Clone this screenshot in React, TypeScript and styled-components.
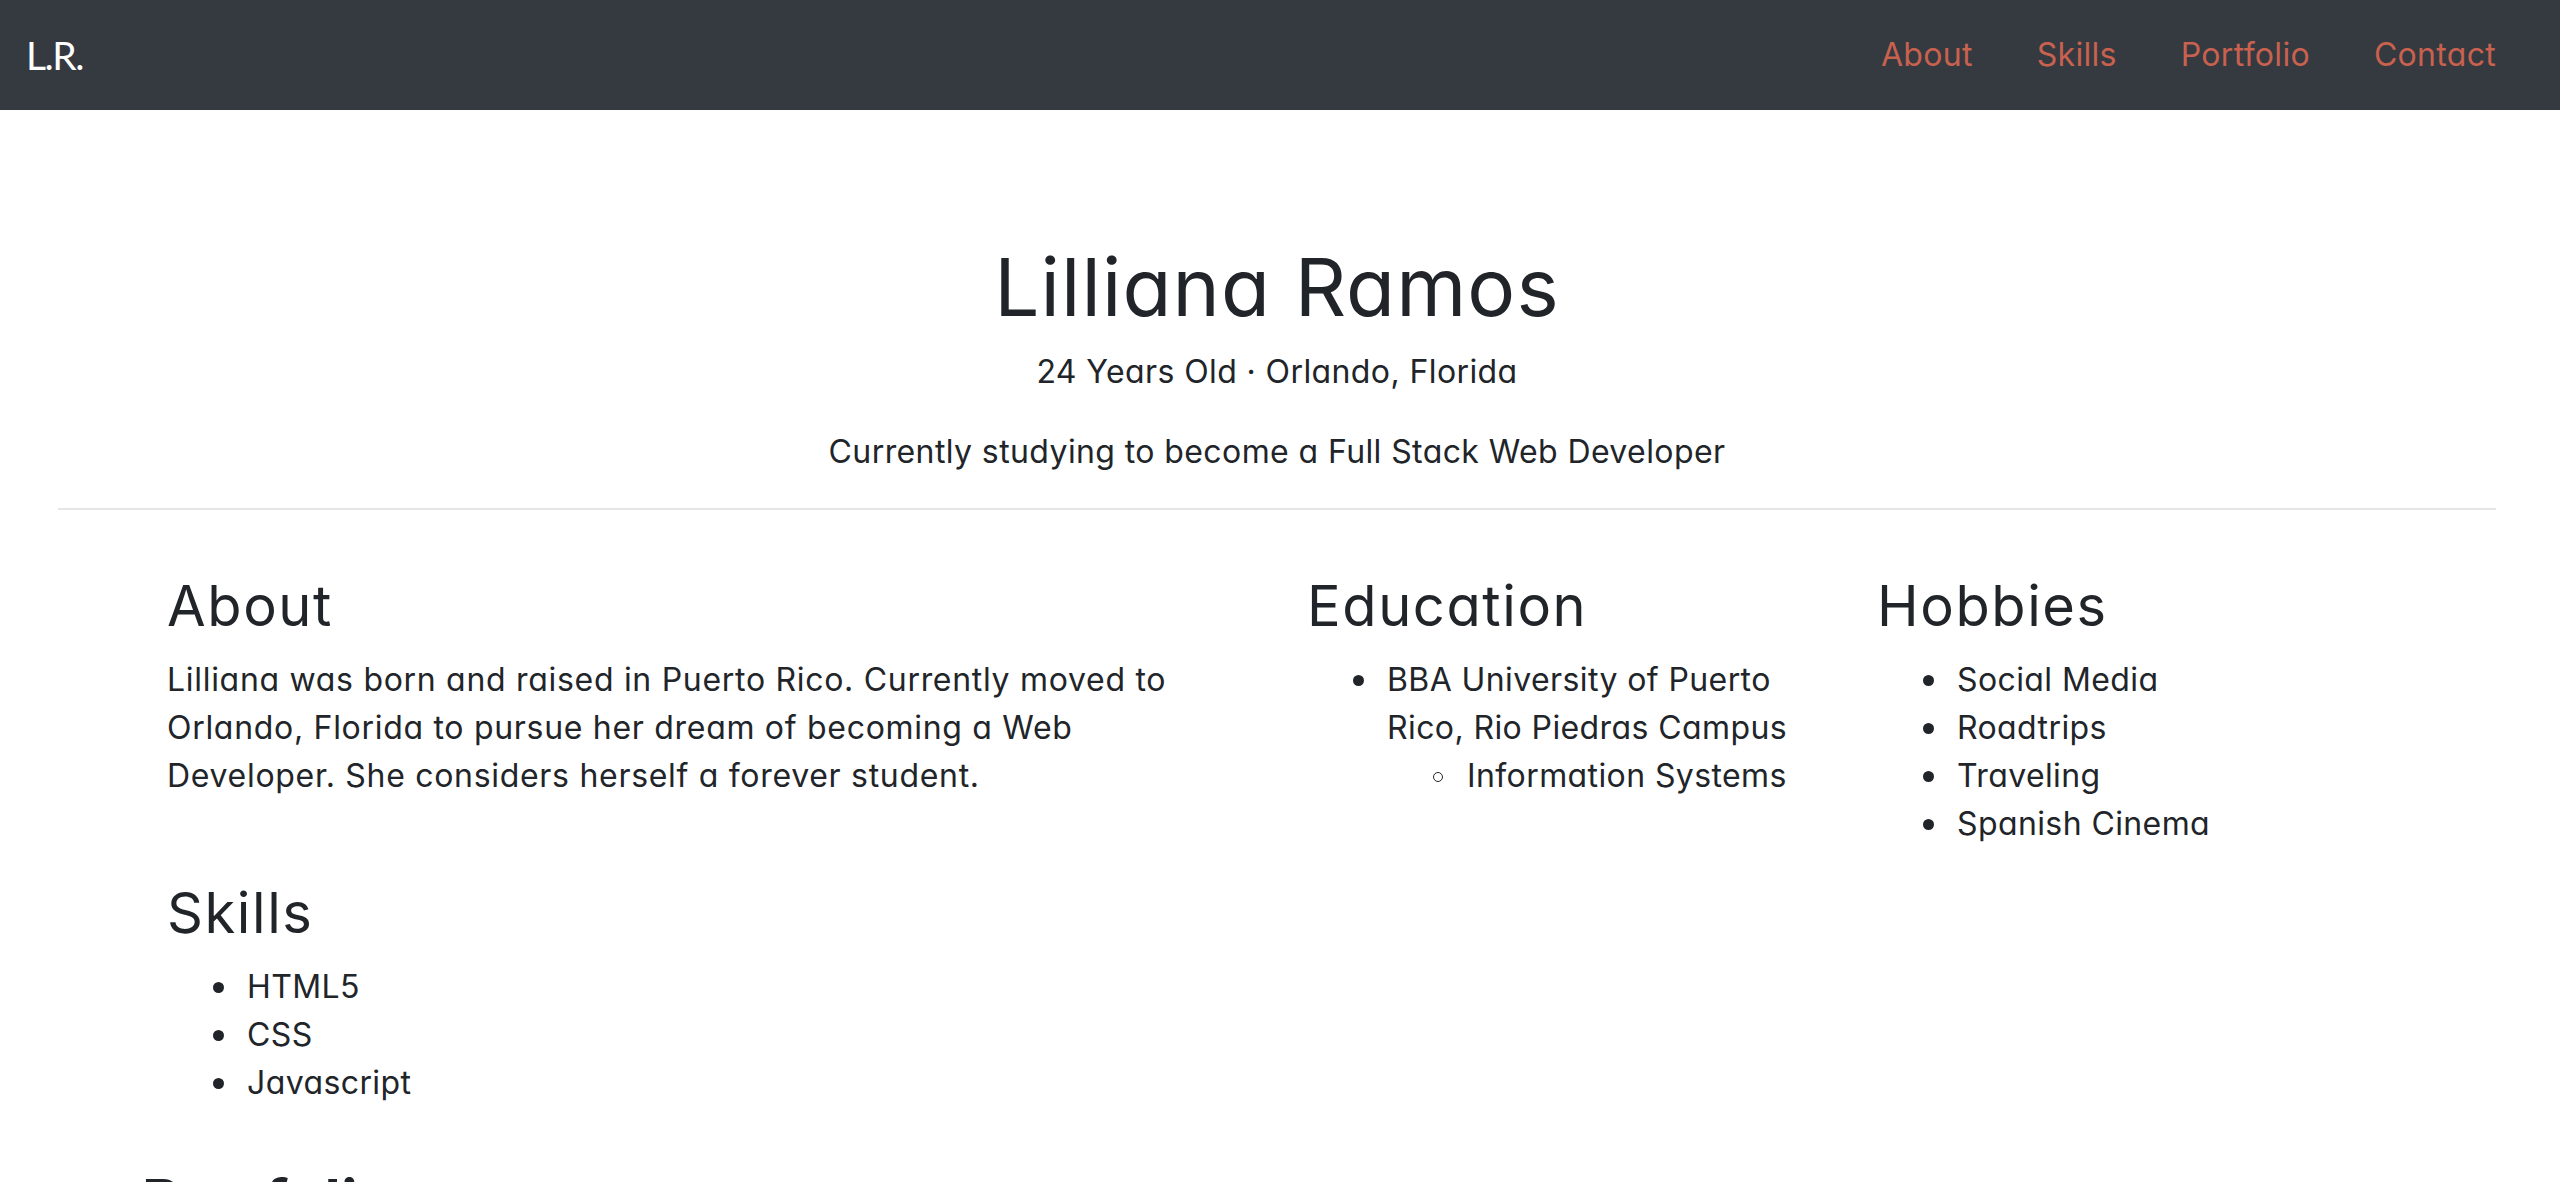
import React from "react";
import styled, { createGlobalStyle } from "styled-components";

const GlobalStyle = createGlobalStyle`
  html, body {
    margin: 0;
    padding: 0;
    background: #ffffff;
  }
  body {
    font-family: "Inter", "Noto Sans", sans-serif;
    font-feature-settings: "cv11" 1;
    font-size: 32px;
    line-height: 1.5;
    letter-spacing: 0.4px;
    color: #212529;
    overflow: hidden;
  }
  * { box-sizing: border-box; }
`;

const NavBar = styled.nav`
  height: 110px;
  background: #343a40;
  display: flex;
  align-items: center;
  justify-content: space-between;
  padding: 0 32px 0 26px;
`;

const Brand = styled.a`
  font-family: "Lato", "Liberation Sans", sans-serif;
  font-feature-settings: normal;
  font-size: 39px;
  letter-spacing: -1.5px;
  color: #ffffff;
  text-decoration: none;
  line-height: 1;
`;

const NavList = styled.div`
  display: flex;
  align-items: center;
`;

const NavLink = styled.a`
  padding: 0 32px;
  color: #c9614f;
  font-size: 32px;
  letter-spacing: 0.3px;
  text-decoration: none;
`;

const Main = styled.main`
  width: 2554px;
`;

const Hero = styled.header`
  text-align: center;
  padding-top: 129px;
`;

const Title = styled.h1`
  font-size: 80px;
  font-weight: 400;
  line-height: 1.2;
  letter-spacing: 1.1px;
  margin: 0 0 13px;
`;

const Lead = styled.p`
  margin: 0 0 32px;
`;

const Divider = styled.hr`
  margin: 32px 58px 0;
  border: 0;
  border-top: 2px solid rgba(0, 0, 0, 0.1);
  height: 0;
`;

const Container = styled.div`
  width: 2280px;
  margin: 0 auto;
  padding-top: 63px;
`;

const Row = styled.div`
  display: grid;
  grid-template-columns: 1140px 570px 570px;
`;

const Col = styled.section`
  padding: 0 30px;
`;

const SectionTitle = styled.h3`
  font-size: 56px;
  font-weight: 400;
  line-height: 1.2;
  letter-spacing: 1.6px;
  margin: 0 0 16px;
`;

const Paragraph = styled.p`
  margin: 0 0 32px;
  letter-spacing: 0.7px;
`;

const List = styled.ul<{ $nested?: boolean }>`
  margin: 0 0 ${(p) => (p.$nested ? "0" : "32px")};
  padding-left: 80px;
  list-style: none;

  & > li {
    position: relative;
  }

  & > li::before {
    content: "";
    position: absolute;
    box-sizing: border-box;
    left: ${(p) => (p.$nested ? "-34px" : "-34px")};
    top: ${(p) => (p.$nested ? "20px" : "19px")};
    width: ${(p) => (p.$nested ? "10px" : "11px")};
    height: ${(p) => (p.$nested ? "10px" : "11px")};
    border-radius: 50%;
    background: ${(p) => (p.$nested ? "transparent" : "#212529")};
    border: ${(p) => (p.$nested ? "1.5px solid #212529" : "0")};
  }
`;

const PortfolioWrap = styled.div`
  padding: 26px 142px 0;
`;

const PortfolioTitle = styled.h2`
  font-size: 60px;
  font-weight: 700;
  line-height: 1.2;
  margin: 0;
`;

export default function App() {
  return (
    <>
      <GlobalStyle />
      <NavBar>
        <Brand href="#">L.R.</Brand>
        <NavList>
          <NavLink href="#about">About</NavLink>
          <NavLink href="#skills">Skills</NavLink>
          <NavLink href="#portfolio">Portfolio</NavLink>
          <NavLink href="#contact">Contact</NavLink>
        </NavList>
      </NavBar>
      <Main>
        <Hero>
          <Title>Lilliana Ramos</Title>
          <Lead>24 Years Old · Orlando, Florida</Lead>
          <Lead>Currently studying to become a Full Stack Web Developer</Lead>
        </Hero>
        <Divider />
        <Container>
          <Row>
            <Col>
              <SectionTitle>About</SectionTitle>
              <Paragraph>
                Lilliana was born and raised in Puerto Rico. Currently moved to
                Orlando, Florida to pursue her dream of becoming a Web
                Developer. She considers herself a forever student.
              </Paragraph>
            </Col>
            <Col>
              <SectionTitle>Education</SectionTitle>
              <List>
                <li>
                  BBA University of Puerto Rico, Rio Piedras Campus
                  <List $nested>
                    <li>Information Systems</li>
                  </List>
                </li>
              </List>
            </Col>
            <Col>
              <SectionTitle>Hobbies</SectionTitle>
              <List>
                <li>Social Media</li>
                <li>Roadtrips</li>
                <li>Traveling</li>
                <li>Spanish Cinema</li>
              </List>
            </Col>
          </Row>
          <Row>
            <Col>
              <SectionTitle>Skills</SectionTitle>
              <List>
                <li>HTML5</li>
                <li>CSS</li>
                <li>Javascript</li>
              </List>
            </Col>
          </Row>
        </Container>
        <PortfolioWrap>
          <PortfolioTitle>Portfolio</PortfolioTitle>
        </PortfolioWrap>
      </Main>
    </>
  );
}
